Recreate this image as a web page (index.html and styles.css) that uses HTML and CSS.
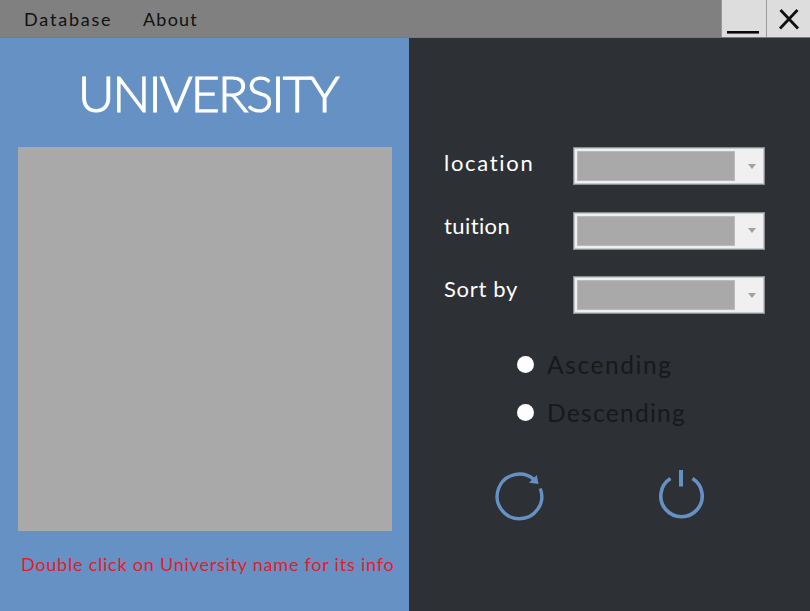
FILE: index.html
```html
<!DOCTYPE html>
<html lang="en">
<head>
<meta charset="utf-8">
<title>University</title>
<link rel="stylesheet" href="styles.css">
</head>
<body>
<div class="window">
  <header class="menubar">
    <nav class="menu"><span class="database">Database</span><span class="about">About</span></nav>
    <button class="control" aria-label="Minimize"><svg width="44" height="37" viewBox="0 0 44 37"><path d="M5 32.300H37" stroke="#080808" stroke-width="2.600"/></svg></button>
    <button class="control" aria-label="Close"><svg width="44" height="37" viewBox="0 0 44 37"><path d="M13.500 10L31 28.500M30.500 10L13 28.500" stroke="#101010" stroke-width="2.800" fill="none"/></svg></button>
  </header>
  <main class="content">
    <section class="results">
      <h1>UNIVERSITY</h1>
      <div class="list"></div>
      <p class="hint">Double click on University name for its info</p>
    </section>
    <section class="filters">
      <div class="row"><span class="label location">location</span><div class="combo"><div class="field"></div><i class="arrow"></i></div></div>
      <div class="row"><span class="label tuition">tuition</span><div class="combo"><div class="field"></div><i class="arrow"></i></div></div>
      <div class="row"><span class="label sort">Sort by</span><div class="combo"><div class="field"></div><i class="arrow"></i></div></div>
      <div class="options">
        <div class="option"><i class="dot"></i><span class="ascending">Ascending</span></div>
        <div class="option"><i class="dot"></i><span class="descending">Descending</span></div>
      </div>
      <div class="actions">
        <svg width="50" height="54" viewBox="0 0 50 54" fill="none" stroke="#6691c4" stroke-width="3.400"><path d="M46.300 20.500A22.300 22.300 0 1 1 40 11.500"/><path d="M42.800 7L44.500 16L35 14.800Z" fill="#6691c4" stroke="none"/></svg>
        <svg width="46" height="54" viewBox="0 0 46 54" fill="none" stroke="#6691c4" stroke-width="3.600"><path d="M12.500 10.500A20.700 20.700 0 1 0 34.500 10.500"/><path d="M23 2V18.500" stroke-width="4"/></svg>
      </div>
    </section>
  </main>
</div>
</body>
</html>
```

FILE: styles.css
```css
* { box-sizing: border-box; }
body { margin: 0; font-family: Lato, "Open Sans", sans-serif; overflow: hidden; }
.window { width: 810px; height: 611px; display: flex; flex-direction: column; background: #2d3035; }
.menubar { height: 38px; flex: none; display: flex; background: #808080; border-bottom: 1px solid #76797d; }
.menu { flex: 1; display: flex; padding-left: 24px; gap: 30px; font-size: 18px; line-height: 38px; color: #101010; white-space: nowrap; }
.database { width: 89px; letter-spacing: 1.8px; }
.about { letter-spacing: 1.2px; }
.control { width: 44px; height: 37px; padding: 0; border: 0; border-left: 1px solid #999; background: #ddd; }
.control:first-of-type { width: 45px; }
.control svg { display: block; }
.content { flex: 1; display: flex; }
.results { width: 409px; background: #6691c4; padding: 26px 0 0 18px; }
h1 { margin: 0 0 24px 60px; font-size: 50px; line-height: 59px; font-weight: 300; color: #fff; letter-spacing: -1.8px; -webkit-text-stroke: 1.2px #fff; white-space: nowrap; }
.list { width: 374px; height: 384px; background: #a9a9a9; }
.hint { margin: 20px 0 0 3px; font-size: 18px; line-height: 26px; color: #e21b2c; letter-spacing: .77px; white-space: nowrap; }
.filters { flex: 1; padding: 109px 45px 0 35px; }
.row { display: flex; justify-content: space-between; height: 38px; margin-bottom: 26.500px; }
.label { font-size: 22px; color: #fff; white-space: nowrap; }
.location { line-height: 32px; letter-spacing: 1.7px; }
.tuition { line-height: 28px; letter-spacing: .4px; }
.sort { line-height: 26px; letter-spacing: .7px; }
.combo { width: 192px; height: 38px; border: 1px solid #8b8d90; background: #f0f0f0; padding: 3px; display: flex; align-items: center; box-shadow: inset 0 0 0 1px #c8c9ca; }
.field { width: 158px; height: 30px; background: #a9a9a9; border: 1px solid #bababa; }
.arrow { margin-left: 13px; border: 4px solid transparent; border-top: 5px solid #a0a0a0; border-bottom: 0; }
.options { padding: 0 0 0 73px; }
.option { display: flex; align-items: center; height: 48px; font-size: 24.500px; line-height: 48px; color: #17191b; white-space: nowrap; }
.ascending { letter-spacing: 1.600px; padding-top: 1px; }
.descending { letter-spacing: 1.300px; padding-top: 1px; }
.dot { width: 17px; height: 17px; margin-right: 13px; border-radius: 50%; background: #fff; }
.actions { display: flex; gap: 114px; padding: 31px 0 0 50px; }
```
